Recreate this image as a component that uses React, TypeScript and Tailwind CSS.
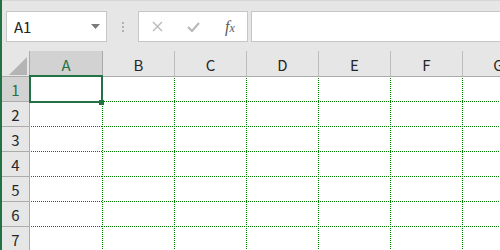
import React from "react";

const COLS = ["A", "B", "C", "D", "E", "F", "G"];
const ROWS = [1, 2, 3, 4, 5, 6, 7];

const FONT = { fontFamily: '"Noto Sans CJK JP", "Noto Sans", sans-serif' };

// dotted green gridlines on the right and bottom edge of each cell;
// rows are 25px tall, so every other row shifts the vertical dots by 1px to keep them continuous
const CELL_ODD =
  "shrink-0 [background:repeating-linear-gradient(to_right,transparent_0_1px,#008000_1px_2px)_left_bottom/100%_1px_no-repeat,repeating-linear-gradient(to_bottom,transparent_0_1px,#008000_1px_2px)_right_top/1px_100%_no-repeat,#fff]";
const CELL_EVEN =
  "shrink-0 [background:repeating-linear-gradient(to_right,transparent_0_1px,#008000_1px_2px)_left_bottom/100%_1px_no-repeat,repeating-linear-gradient(to_bottom,#008000_0_1px,transparent_1px_2px)_right_top/1px_100%_no-repeat,#fff]";

function colWidth(i: number) {
  return i === 0 ? "w-[73px]" : "w-[72px]";
}

export default function App() {
  return (
    <div
      className="relative flex h-[250px] w-[500px] flex-col overflow-hidden border-l-2 border-[#217346] bg-[#e6e6e6]"
      style={FONT}
    >
      {/* formula bar */}
      <div className="flex h-[51px] shrink-0 items-start border-t border-[#d6d6d6] pl-[4px] pt-[10px]">
        <div className="flex h-[31px] w-[101px] shrink-0 items-center justify-between border border-[#c6c6c6] bg-white pl-[7px] pr-[6px]">
          <span className="text-[15px] leading-none text-[#222]">A1</span>
          <svg width="9" height="5" viewBox="0 0 9 5">
            <path d="M0 0h9L4.5 5z" fill="#7a7a7a" />
          </svg>
        </div>
        <div className="flex h-[31px] w-[31px] shrink-0 flex-col items-center justify-center gap-[2px]">
          <span className="h-[2px] w-[2px] bg-[#b0b0b0]" />
          <span className="h-[2px] w-[2px] bg-[#b0b0b0]" />
          <span className="h-[2px] w-[2px] bg-[#b0b0b0]" />
        </div>
        <div className="flex h-[31px] w-[110px] shrink-0 items-center border border-[#c6c6c6] bg-white">
          <div className="flex w-[36px] justify-center">
            <svg width="11" height="11" viewBox="0 0 11 11">
              <path d="M1 1l9 9M10 1l-9 9" stroke="#b9b9b9" strokeWidth="1.4" />
            </svg>
          </div>
          <div className="flex w-[36px] justify-center">
            <svg width="13" height="10" viewBox="0 0 13 10">
              <path d="M1 5l4 4 7-8" stroke="#b9b9b9" strokeWidth="2.2" fill="none" />
            </svg>
          </div>
          <div className="flex w-[36px] justify-center pl-[2px]">
            <span
              className="text-[16px] italic leading-none text-[#5a5a5a]"
              style={{ fontFamily: '"Liberation Serif", serif' }}
            >
              f<span className="text-[12px]">x</span>
            </span>
          </div>
        </div>
        <div className="ml-[3px] h-[31px] flex-1 border border-r-0 border-[#c6c6c6] bg-white" />
      </div>

      {/* sheet */}
      <div className="relative flex flex-col">
        <div className="flex h-[26px] border-b border-[#ababab]">
          <div className="flex w-[28px] shrink-0 items-end justify-end border-r border-[#ababab] pb-[1px] pr-[2px]">
            <svg width="18" height="18" viewBox="0 0 18 18">
              <path d="M18 0V18H0z" fill="#b4b4b4" />
            </svg>
          </div>
          {COLS.map((c, i) => (
            <div
              key={c}
              className={`${colWidth(i)} flex shrink-0 items-center justify-center border-r pt-[1px] text-[15px] leading-none ${
                i === 0 ? "border-[#ababab] bg-[#d2d2d2] text-[#217346]" : "border-[#bdbdbd] text-[#262626]"
              }`}
            >
              {c}
            </div>
          ))}
        </div>

        {ROWS.map((r) => (
          <div key={r} className="flex h-[25px]">
            <div
              className={`flex w-[28px] shrink-0 items-center justify-center border-b border-r border-[#ababab] text-[15px] leading-none ${
                r === 1 ? "bg-[#d2d2d2] text-[#217346]" : "text-[#262626]"
              }`}
            >
              {r}
            </div>
            {COLS.map((c, i) => (
              <div key={c} className={`${colWidth(i)} ${r % 2 === 1 ? CELL_ODD : CELL_EVEN}`} />
            ))}
          </div>
        ))}

        {/* active cell */}
        <div className="absolute left-[27px] top-[24px] h-[28px] w-[74px] border-2 border-[#217346]">
          <div className="absolute -bottom-[4px] -right-[3px] h-[5px] w-[5px] bg-[#217346]" />
        </div>
      </div>
    </div>
  );
}
